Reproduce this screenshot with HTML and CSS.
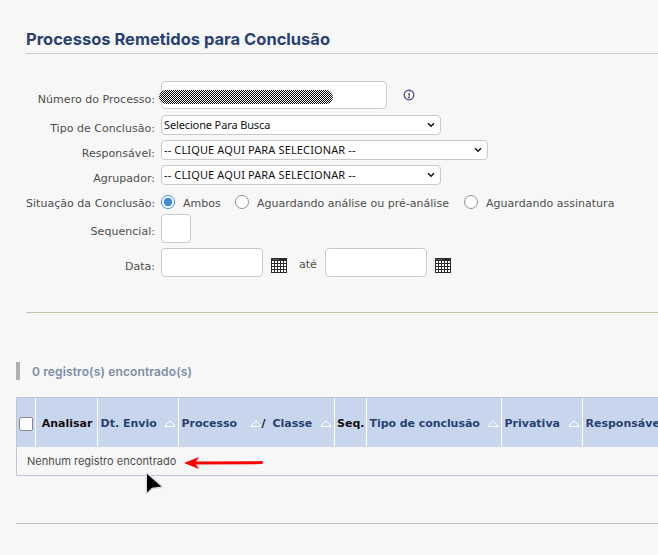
FILE: index.html
```html
<!DOCTYPE html>
<html lang="pt-BR">
<head>
<meta charset="utf-8">
<title>Processos Remetidos para Conclusão</title>
<link rel="stylesheet" href="styles.css">
</head>
<body>
<svg class="defs" width="0" height="0">
  <defs>
    <symbol id="chevron" viewBox="0 0 8 6"><path d="M1 1.2 4 4.2 7 1.2" fill="none" stroke="#111" stroke-width="1.5"/></symbol>
    <symbol id="calendar" viewBox="0 0 16 15">
      <path fill="#2b272b" d="M0 0h16v15H0z"/><path fill="#555257" d="M1 1h7v1H1z"/>
      <path fill="none" stroke="#fff" stroke-width="2" stroke-dasharray="2 1" d="M1 4h14M1 7h14M1 10h14M1 13h14"/>
    </symbol>
    <symbol id="sort" viewBox="0 0 12 7"><path d="M.8 6.5h10.4L6 .8z" fill="none" stroke="#fff" stroke-width="1"/></symbol>
    <pattern id="dither" width="2" height="2" patternUnits="userSpaceOnUse"><path fill="#fff" d="M0 0h2v2H0z"/><path fill="#000" d="M0 0h1v1H0zM1 1h1v1H1z"/></pattern>
  </defs>
</svg>
<main>
  <h1>Processos Remetidos para Conclusão</h1>
  <form class="search">
    <div class="row number"><span class="label">Número do Processo:</span>
      <div class="input process"><svg class="redaction" width="174" height="14"><rect width="174" height="14" rx="7" fill="url(#dither)"/></svg></div>
      <svg class="info" width="12" height="12" viewBox="0 0 12 12"><circle cx="6" cy="6" r="4.8" fill="#fff" stroke="#514596" stroke-width="1.3"/><path d="M6.2 2.8h1.2M5 5.1h1.5L5.7 8.6H7" fill="none" stroke="#555052" stroke-width="1.1"/></svg>
    </div>
    <div class="row pick"><span class="label">Tipo de Conclusão:</span><div class="select"><span class="phrase">Selecione Para Busca</span><svg class="chevron"><use href="#chevron"/></svg></div></div>
    <div class="row pick"><span class="label">Responsável:</span><div class="select wide"><span>-- CLIQUE AQUI PARA SELECIONAR --</span><svg class="chevron"><use href="#chevron"/></svg></div></div>
    <div class="row pick"><span class="label">Agrupador:</span><div class="select"><span>-- CLIQUE AQUI PARA SELECIONAR --</span><svg class="chevron"><use href="#chevron"/></svg></div></div>
    <div class="row radios"><span class="label">Situação da Conclusão:</span>
      <span class="radio checked"></span><span class="option first">Ambos</span>
      <span class="radio"></span><span class="option second">Aguardando análise ou pré-análise</span>
      <span class="radio"></span><span class="option">Aguardando assinatura</span>
    </div>
    <div class="row sequence"><span class="label">Sequencial:</span><div class="input tiny"></div></div>
    <div class="row dates"><span class="label">Data:</span><div class="input date"></div><svg class="calendar"><use href="#calendar"/></svg><span class="until">até</span><div class="input date"></div><svg class="calendar"><use href="#calendar"/></svg></div>
  </form>
  <section class="results">
    <h2>0 registro(s) encontrado(s)</h2>
    <div class="table">
      <div class="head">
        <div class="cell center"><span class="checkbox"></span></div>
        <div class="cell plain center">Analisar</div>
        <div class="cell">Dt. Envio<svg class="sort"><use href="#sort"/></svg></div>
        <div class="cell process-class"><span class="process-name">Processo</span><svg class="sort"><use href="#sort"/></svg><span class="slash">/</span><span>Classe</span><svg class="sort last"><use href="#sort"/></svg></div>
        <div class="cell plain seq">Seq.</div>
        <div class="cell type">Tipo de conclusão<svg class="sort"><use href="#sort"/></svg></div>
        <div class="cell">Privativa<svg class="sort"><use href="#sort"/></svg></div>
        <div class="cell">Responsável</div>
      </div>
      <div class="empty">Nenhum registro encontrado</div>
    </div>
  </section>
</main>
<svg class="arrow" width="80" height="14" viewBox="0 0 80 14"><path d="M12 7 77.5 6.6" stroke="red" stroke-width="3" stroke-linecap="round"/><path d="M0 7 15 1 11 7l4 6z" fill="red"/></svg>
<svg class="cursor" width="20" height="24" viewBox="0 0 20 24"><path d="M2 2v18.5l5-4.8 9.3-1.2z" fill="#000" stroke="#ddd" stroke-width="3" paint-order="stroke" stroke-linejoin="round"/></svg>
</body>
</html>
```
FILE: styles.css
```css
* { box-sizing: border-box; }
html, body { margin: 0; width: 658px; height: 555px; overflow: hidden; }
body { position: relative; background: #f7f7f7; color: #4e4e4b; font: 11px/14px "DejaVu Sans", sans-serif; }
svg { flex: none; }
.defs { position: absolute; }
main { padding-top: 25px; white-space: nowrap; }
h1 { margin: 0 0 0 26px; height: 29px; border-bottom: 1px solid #ccc; color: #294171; font: 700 16.5px/28px Inter, sans-serif; }
.search { margin-left: 26px; height: 259px; padding-top: 27px; border-bottom: 1px solid #cac3ac; }
.row { display: flex; align-items: flex-start; }
.label { width: 129px; margin-right: 6px; text-align: right; flex: none; letter-spacing: .03px; }
.input { flex: none; background: #fff; border: 1px solid #c9c9c9; border-radius: 4px; }
.number { height: 34px; }
.number .label { padding-top: 12px; }
.process { position: relative; width: 226px; height: 28px; }
.redaction { position: absolute; left: -3px; top: 8px; }
.info { margin: 8px 0 0 16px; }
.pick { height: 25px; }
.pick .label { padding-top: 7px; }
.select { display: flex; align-items: center; justify-content: space-between; width: 280px; height: 20px; padding: 0 5px 1px 2px; background: #fff; border: 1px solid #c9c9c9; border-radius: 4px; color: #111; font: 11px/16px "Noto Sans", sans-serif; letter-spacing: .13px; }
.phrase { letter-spacing: -.13px; }
.wide { width: 327px; }
.chevron { width: 8px; height: 6px; }
.radios { height: 24px; }
.radios .label, .option { padding-top: 7px; }
.radio { flex: none; width: 14px; height: 14px; margin-top: 5px; border: 1px solid #8f8f9d; border-radius: 50%; background: #fff; }
.checked { border-color: #428cdc; background: radial-gradient(circle, #428cdc 0 4px, #fff 4.6px); }
.option { margin-left: 8px; letter-spacing: .02px; }
.first { width: 52px; }
.second { width: 207px; }
.sequence { height: 34px; }
.sequence .label { padding-top: 11px; }
.tiny { width: 30px; height: 29px; }
.dates .label { padding-top: 12px; }
.date { width: 102px; height: 29px; }
.calendar { width: 16px; height: 15px; margin: 10px 0 0 8px; }
.until { width: 26px; margin: 10px 0 0 12px; }
.results { margin-left: 16px; height: 211px; padding-top: 49px; border-bottom: 1px solid #cac3b6; }
h2 { margin: 0 0 17px; height: 18px; padding-left: 12px; border-left: 4px solid #b0b0b0; color: #7c8da7; font: 600 12px/19px Inter, sans-serif; letter-spacing: .13px; }
.table { border: 1px solid #c4c3de; border-right: 0; height: 79px; }
.head { display: grid; grid-template-columns: 19px 62px 81px 156px 32px 135px 81px 1fr; height: 49px; background: #c8d6ed; color: #294171; font-weight: 700; }
.cell { display: flex; align-items: center; min-width: 0; padding: 2px 2px 0 2.5px; border-right: 1px solid #fff; }
.cell:last-child { border: 0; }
.plain { color: #111; }
.center { justify-content: center; padding: 2px 0 0; }
.plain.center { padding-left: 1px; }
.seq { padding-left: 2px; }
.type { letter-spacing: -.06px; }
.checkbox { width: 14px; height: 14px; background: #fff; border: 1px solid #858593; border-radius: 2px; }
.sort { width: 12px; height: 7px; margin-left: auto; }
.process-name { width: 68px; }
.process-class .sort { margin-left: 0; }
.slash { width: 11px; color: #111; }
.process-class .last { margin-left: auto; }
.empty { height: 28px; padding-left: 10px; font: 11px/28px Inter, sans-serif; }
.arrow { position: absolute; left: 184px; top: 456px; }
.cursor { position: absolute; left: 145px; top: 472px; }
```
